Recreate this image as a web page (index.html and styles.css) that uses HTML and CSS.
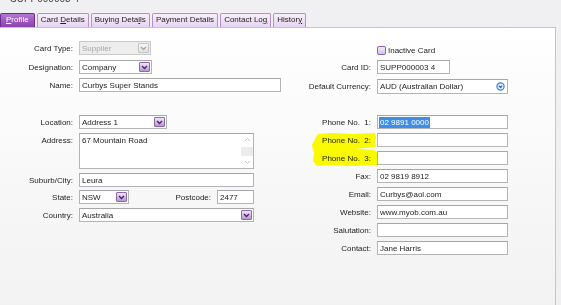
FILE: index.html
```html
<html>
<head>
<meta http-equiv="Content-Type" content="text/html; charset=UTF-8" />
<link rel="stylesheet" href="styles.css">
</head>
<body>

<div class="head">
	<span class="head-title">SUPP000003 4</span>
</div>

<div class="tabs">
	<div class="tab active"><u>P</u>rofile</div>
	<div class="tab">Card <u>D</u>etails</div>
	<div class="tab">Buying Deta<u>i</u>ls</div>
	<div class="tab">Payment Details</div>
	<div class="tab">Contact Lo<u>g</u></div>
	<div class="tab">Histor<u>y</u></div>
</div>

<div class="panel">
	<div class="col left">
		<div class="row r-cardtype">
			<label>Card Type:</label>
			<div class="field select disabled w-cardtype">Supplier<span class="drop"><svg width="7" height="5" viewBox="0 0 7 5"><path d="M1 1 L3.5 3.5 L6 1" /></svg></span></div>
		</div>
		<div class="row r-designation">
			<label>Designation:</label>
			<div class="field select w-designation">Company<span class="drop"><svg width="7" height="5" viewBox="0 0 7 5"><path d="M1 1 L3.5 3.5 L6 1" /></svg></span></div>
		</div>
		<div class="row r-name">
			<label>Name:</label>
			<div class="field w-name">Curbys Super Stands</div>
		</div>
		<div class="row r-location">
			<label>Location:</label>
			<div class="field select w-location">Address 1<span class="drop"><svg width="7" height="5" viewBox="0 0 7 5"><path d="M1 1 L3.5 3.5 L6 1" /></svg></span></div>
		</div>
		<div class="row r-address">
			<label>Address:</label>
			<div class="field area w-wide">
				<span class="area-text">67 Mountain Road</span>
				<span class="scroll">
					<svg width="7" height="5" viewBox="0 0 7 5"><path d="M1 4 L3.5 1.5 L6 4" /></svg>
					<span class="scroll-thumb"></span>
					<svg width="7" height="5" viewBox="0 0 7 5"><path d="M1 1 L3.5 3.5 L6 1" /></svg>
				</span>
			</div>
		</div>
		<div class="row r-suburb">
			<label>Suburb/City:</label>
			<div class="field w-wide">Leura</div>
		</div>
		<div class="row r-state">
			<label>State:</label>
			<div class="field select w-state">NSW<span class="drop"><svg width="7" height="5" viewBox="0 0 7 5"><path d="M1 1 L3.5 3.5 L6 1" /></svg></span></div>
			<span class="sublabel">Postcode:</span>
			<div class="field w-postcode">2477</div>
		</div>
		<div class="row r-country">
			<label>Country:</label>
			<div class="field select w-wide">Australia<span class="drop"><svg width="7" height="5" viewBox="0 0 7 5"><path d="M1 1 L3.5 3.5 L6 1" /></svg></span></div>
		</div>
	</div>

	<div class="col right">
		<div class="row r-inactive">
			<label></label>
			<span class="check"></span><span class="check-text">Inactive Card</span>
		</div>
		<div class="row r-cardid">
			<label>Card ID:</label>
			<div class="field w-cardid">SUPP000003 4</div>
		</div>
		<div class="row r-currency">
			<label>Default Currency:</label>
			<div class="field select tall w-right">AUD (Australian Dollar)<span class="round"><svg width="9" height="9" viewBox="0 0 9 9"><circle cx="4.5" cy="4.5" r="3.6" /><path d="M2.8 3.8 L4.5 5.5 L6.2 3.8" /></svg></span></div>
		</div>
		<div class="row r-phone1">
			<label>Phone No.&nbsp; 1:</label>
			<div class="field w-right"><span class="selected">02 9891 0000</span></div>
		</div>
		<div class="row">
			<label>Phone No.&nbsp; 2:</label>
			<div class="field w-right"></div>
		</div>
		<div class="row">
			<label>Phone No.&nbsp; 3:</label>
			<div class="field w-right"></div>
		</div>
		<div class="row">
			<label>Fax:</label>
			<div class="field w-right">02 9819 8912</div>
		</div>
		<div class="row">
			<label>Email:</label>
			<div class="field w-right">Curbys@aol.com</div>
		</div>
		<div class="row">
			<label>Website:</label>
			<div class="field w-right">www.myob.com.au</div>
		</div>
		<div class="row">
			<label>Salutation:</label>
			<div class="field w-right"></div>
		</div>
		<div class="row">
			<label>Contact:</label>
			<div class="field w-right">Jane Harris</div>
		</div>
	</div>

	<!-- highlighter stroke drawn over the phone labels -->
	<svg class="marker" width="68" height="34" viewBox="0 0 68 34">
		<path d="M6 1 L20 0 L40 1 L63 0 L64 4 L63 9 L64 14 L52 15 L44 16 L62 17 L65 19 L66 22 L65 27 L66 32 L40 33 L20 32 L5 33 L1 28 L2 20 L0 12 L3 6 Z" />
	</svg>
</div>

</body>
</html>
```

FILE: styles.css
```css
:root {
	--color-bg: #f0f0f2;
	--color-fg: #1c1c1c;
	--color-border: #b2b4b8;
	--color-purple: #8c45b4;
}

body {
	margin: 0;
	background-color: var(--color-bg);
	color: var(--color-fg);
	font-family: "Liberation Sans", Arial, sans-serif;
	font-size: 8px;
	overflow: hidden;
}

.head {
	height: 13px;
	overflow: hidden;
}

.head-title {
	display: block;
	margin-top: -7px;
	padding-left: 10px;
	font-size: 10px;
	color: #444;
}

/* tab strip */
.tabs {
	display: flex;
	gap: 2px;
	height: 14px;
}

.tab {
	box-sizing: border-box;
	height: 14px;
	padding: 0 3px;
	line-height: 12px;
	border: 1px solid #b48fcb;
	border-bottom: none;
	border-radius: 2px 2px 0 0;
	background: linear-gradient(#f7eefb, #e6d4f0);
	color: #222;
}

.tab.active {
	padding: 0 5px;
	border-color: #6d2a90;
	background: linear-gradient(#b477d3, #8a40b2);
	color: #fff;
}

/* main panel */
.panel {
	position: relative;
	display: flex;
	width: 555px;
	height: 277px;
	border-top: 1px solid #c6c6c8;
	border-right: 1px solid #c6c6c8;
	background: linear-gradient(#ffffff, #f2f2f2);
}

.col {
	display: flex;
	flex-direction: column;
}

.left {
	width: 290px;
	padding-top: 13px;
}

.right {
	padding-top: 17px;
}

.row {
	display: flex;
	align-items: center;
	height: 14px;
	margin-top: 4px;
}

.row label {
	flex: none;
	text-align: right;
	padding-right: 6px;
}

.left label {
	width: 73px;
}

.right label {
	width: 81px;
}

.r-cardtype, .r-inactive { margin-top: 0; }
.r-designation, .r-cardid, .r-currency { margin-top: 5px; }
.r-location { margin-top: 23px; }
.r-phone1 { margin-top: 22px; }
.r-state { margin-top: 3px; width: 254px; }
.r-inactive { height: 10px; }
.r-address { height: 36px; align-items: flex-start; }
.r-address label { padding-top: 3px; }

.field {
	box-sizing: border-box;
	display: flex;
	align-items: center;
	height: 14px;
	padding: 0 2px;
	border: 1px solid var(--color-border);
	border-top-color: #a4a6aa;
	background: #fff;
	white-space: nowrap;
}

.field.tall { height: 15px; }

.field.disabled {
	background: #ededed;
	border-color: #c9c9c9;
	color: #a8a8a8;
}

.w-cardtype { width: 72px; }
.w-designation { width: 73px; }
.w-name { width: 202px; }
.w-location { width: 88px; }
.w-wide { width: 175px; }
.w-state { width: 50px; }
.w-postcode { width: 37px; }
.w-cardid { width: 73px; }
.w-right { width: 131px; }

.select .drop {
	display: flex;
	align-items: center;
	justify-content: center;
	box-sizing: border-box;
	width: 11px;
	height: 10px;
	margin-left: auto;
	margin-right: -1px;
	border: 1px solid #8b67ab;
	border-radius: 1px;
	background: linear-gradient(#f1e6f8, #b898d2);
}

.drop svg path {
	fill: none;
	stroke: #4d2370;
	stroke-width: 1.4;
}

.disabled .drop {
	border-color: #c4c4c4;
	background: linear-gradient(#f6f6f6, #e2e2e2);
}

.disabled .drop svg path {
	stroke: #a6a6a6;
}

.round {
	display: flex;
	margin-left: auto;
	margin-right: 0;
}

.round circle {
	fill: #eef5fc;
	stroke: #3a86cf;
	stroke-width: 1.2;
}

.round path {
	fill: none;
	stroke: #2a72bd;
	stroke-width: 1.3;
}

/* address text area */
.area {
	height: 36px;
	align-items: stretch;
	padding-right: 0;
}

.area-text {
	flex: 1;
	padding-top: 2px;
}

.scroll {
	display: flex;
	flex-direction: column;
	align-items: center;
	justify-content: space-between;
	width: 12px;
	padding: 3px 0;
	box-sizing: border-box;
}

.scroll svg path {
	fill: none;
	stroke: #c4c4c4;
	stroke-width: 1;
}

.scroll-thumb {
	width: 12px;
	height: 9px;
	background: #ececec;
}

.sublabel {
	margin-left: auto;
	padding-right: 6px;
}

.check {
	box-sizing: border-box;
	width: 9px;
	height: 9px;
	border: 1px solid #8b62ad;
	border-radius: 2px;
	background: linear-gradient(#f4ecf9, #d6c1e6);
}

.check-text {
	padding-left: 2px;
}

.selected {
	margin-left: -1px;
	padding: 0 1px;
	background: #3d8ee6;
	color: #fff;
	line-height: 11px;
}

.marker {
	position: absolute;
	left: 312px;
	top: 105px;
	mix-blend-mode: multiply;
}

.marker path {
	fill: #ffff00;
}
```
